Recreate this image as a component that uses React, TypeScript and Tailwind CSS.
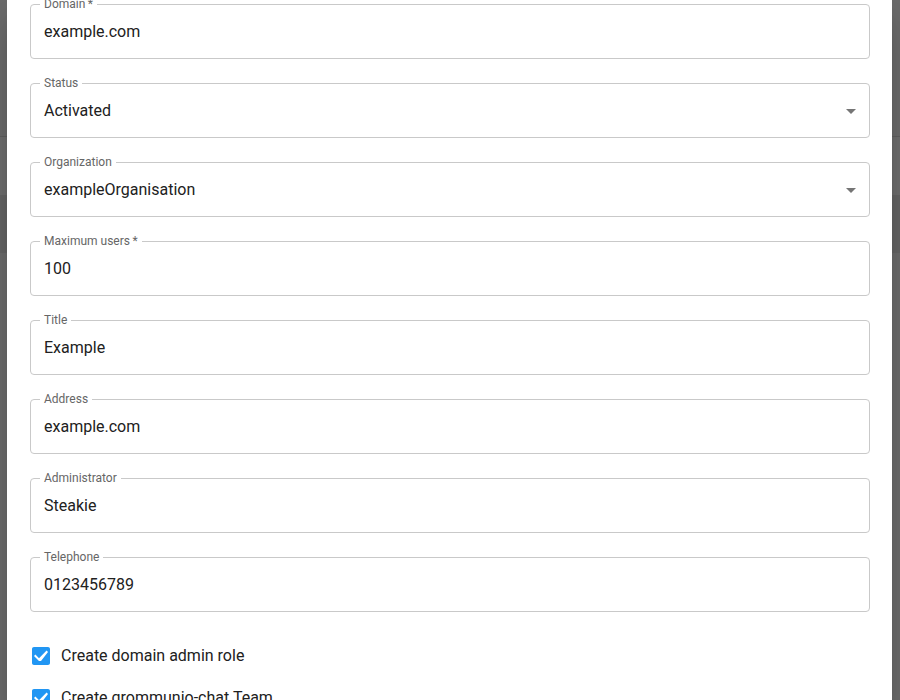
import React from 'react';

type Field = {
  label: string;
  value: string;
  required?: boolean;
  select?: boolean;
};

const fields: Field[] = [
  { label: 'Domain', value: 'example.com', required: true },
  { label: 'Status', value: 'Activated', select: true },
  { label: 'Organization', value: 'exampleOrganisation', select: true },
  { label: 'Maximum users', value: '100', required: true },
  { label: 'Title', value: 'Example' },
  { label: 'Address', value: 'example.com' },
  { label: 'Administrator', value: 'Steakie' },
  { label: 'Telephone', value: '0123456789' },
];

const checks = ['Create domain admin role', 'Create grommunio-chat Team'];

function OutlinedField({ field }: { field: Field }) {
  return (
    <div className="relative flex h-[55px] items-center rounded-[4px] border border-[#c9c9c9] pl-[13px] pr-[40px]">
      {/* notched label */}
      <span className="absolute left-[9px] top-[-7px] bg-white px-[4px] text-[12px] leading-[12px] text-[#666666]">
        {field.label}
        {field.required ? '\u2009*' : ''}
      </span>
      <span className="text-[16px] leading-[23px] text-[#212121]">{field.value}</span>
      {field.select && (
        <svg
          className="absolute right-[6px] top-1/2 h-6 w-6 -translate-y-1/2 text-[#757575]"
          viewBox="0 0 24 24"
          fill="currentColor"
        >
          <path d="M7 10l5 5 5-5z" />
        </svg>
      )}
    </div>
  );
}

function CheckRow({ label }: { label: string }) {
  return (
    <div className="flex h-[42px] items-center">
      <svg className="ml-[-1px] h-6 w-6 shrink-0 text-[#2196f3]" viewBox="0 0 24 24" fill="currentColor">
        <path d="M19 3H5c-1.11 0-2 .9-2 2v14c0 1.1.89 2 2 2h14c1.11 0 2-.9 2-2V5c0-1.1-.89-2-2-2zm-9 14l-5-5 1.41-1.41L10 14.17l7.59-7.59L19 8l-7 9z" />
      </svg>
      <span className="ml-[8px] text-[16px] leading-[24px] text-[#212121]">{label}</span>
    </div>
  );
}

export default function App() {
  return (
    <div
      className="relative h-[700px] w-[900px] overflow-hidden bg-[#6b6b6b]"
      style={{ fontFamily: 'Roboto, "Noto Sans", Arial, sans-serif' }}
    >
      {/* page behind the backdrop */}
      <div className="flex h-full flex-col">
        <div className="h-[136px] bg-[#6a6a6a]" />
        <div className="h-px bg-[#5e5e5e]" />
        <div className="h-[58px] bg-[#6d6d6d]" />
        <div className="h-[58px] bg-[#646464]" />
        <div className="flex-1 bg-[#6b6b6b]" />
      </div>

      {/* dialog */}
      <div className="absolute bottom-0 left-[7px] top-0 w-[885px] overflow-hidden bg-white pl-[23px] pr-[22px] shadow-[0_11px_15px_-7px_rgba(0,0,0,0.2),0_24px_38px_3px_rgba(0,0,0,0.14)]">
        <div className="flex flex-col gap-[24px] pt-[4px]">
          {fields.map((f) => (
            <OutlinedField key={f.label} field={f} />
          ))}
        </div>
        <div className="mt-[23px] flex flex-col">
          {checks.map((c) => (
            <CheckRow key={c} label={c} />
          ))}
        </div>
      </div>
    </div>
  );
}
